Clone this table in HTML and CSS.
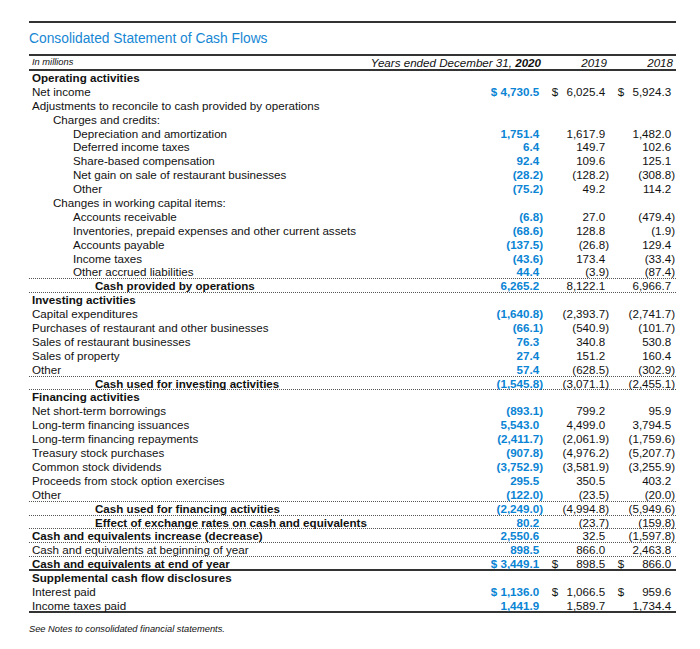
FILE: index.html
```html
<!DOCTYPE html>
<html>
<head>
<meta charset="utf-8">
<title>Consolidated Statement of Cash Flows</title>
<link rel="stylesheet" href="styles.css">
</head>
<body>
<div class="sheet">
  <div class="title">Consolidated Statement of Cash Flows</div>
  <div class="hd">
    <span class="hm">In millions</span>
    <span class="hy">Years ended December 31, <b>2020</b></span>
    <span class="hc2">2019</span>
    <span class="hc3">2018</span>
  </div>

  <div class="row"><span class="lb l0 b">Operating activities</span></div>
  <div class="row"><span class="lb l0">Net income</span><span class="v c1">$ 4,730.5</span><span class="v c2 dl"><span>$</span><span>6,025.4</span></span><span class="v c3 dl"><span>$</span><span>5,924.3</span></span></div>
  <div class="row"><span class="lb l0">Adjustments to reconcile to cash provided by operations</span></div>
  <div class="row"><span class="lb l1">Charges and credits:</span></div>
  <div class="row"><span class="lb l2">Depreciation and amortization</span><span class="v c1">1,751.4</span><span class="v c2">1,617.9</span><span class="v c3">1,482.0</span></div>
  <div class="row"><span class="lb l2">Deferred income taxes</span><span class="v c1">6.4</span><span class="v c2">149.7</span><span class="v c3">102.6</span></div>
  <div class="row"><span class="lb l2">Share-based compensation</span><span class="v c1">92.4</span><span class="v c2">109.6</span><span class="v c3">125.1</span></div>
  <div class="row"><span class="lb l2">Net gain on sale of restaurant businesses</span><span class="v c1 neg">(28.2)</span><span class="v c2 neg">(128.2)</span><span class="v c3 neg">(308.8)</span></div>
  <div class="row"><span class="lb l2">Other</span><span class="v c1 neg">(75.2)</span><span class="v c2">49.2</span><span class="v c3">114.2</span></div>
  <div class="row"><span class="lb l1">Changes in working capital items:</span></div>
  <div class="row"><span class="lb l2">Accounts receivable</span><span class="v c1 neg">(6.8)</span><span class="v c2">27.0</span><span class="v c3 neg">(479.4)</span></div>
  <div class="row"><span class="lb l2">Inventories, prepaid expenses and other current assets</span><span class="v c1 neg">(68.6)</span><span class="v c2">128.8</span><span class="v c3 neg">(1.9)</span></div>
  <div class="row"><span class="lb l2">Accounts payable</span><span class="v c1 neg">(137.5)</span><span class="v c2 neg">(26.8)</span><span class="v c3">129.4</span></div>
  <div class="row"><span class="lb l2">Income taxes</span><span class="v c1 neg">(43.6)</span><span class="v c2">173.4</span><span class="v c3 neg">(33.4)</span></div>
  <div class="row dot"><span class="lb l2">Other accrued liabilities</span><span class="v c1">44.4</span><span class="v c2 neg">(3.9)</span><span class="v c3 neg">(87.4)</span></div>
  <div class="row dot"><span class="lb l3 b">Cash provided by operations</span><span class="v c1">6,265.2</span><span class="v c2">8,122.1</span><span class="v c3">6,966.7</span></div>

  <div class="row"><span class="lb l0 b">Investing activities</span></div>
  <div class="row"><span class="lb l0">Capital expenditures</span><span class="v c1 neg">(1,640.8)</span><span class="v c2 neg">(2,393.7)</span><span class="v c3 neg">(2,741.7)</span></div>
  <div class="row"><span class="lb l0">Purchases of restaurant and other businesses</span><span class="v c1 neg">(66.1)</span><span class="v c2 neg">(540.9)</span><span class="v c3 neg">(101.7)</span></div>
  <div class="row"><span class="lb l0">Sales of restaurant businesses</span><span class="v c1">76.3</span><span class="v c2">340.8</span><span class="v c3">530.8</span></div>
  <div class="row"><span class="lb l0">Sales of property</span><span class="v c1">27.4</span><span class="v c2">151.2</span><span class="v c3">160.4</span></div>
  <div class="row dot"><span class="lb l0">Other</span><span class="v c1">57.4</span><span class="v c2 neg">(628.5)</span><span class="v c3 neg">(302.9)</span></div>
  <div class="row dot"><span class="lb l3 b">Cash used for investing activities</span><span class="v c1 neg">(1,545.8)</span><span class="v c2 neg">(3,071.1)</span><span class="v c3 neg">(2,455.1)</span></div>

  <div class="row"><span class="lb l0 b">Financing activities</span></div>
  <div class="row"><span class="lb l0">Net short-term borrowings</span><span class="v c1 neg">(893.1)</span><span class="v c2">799.2</span><span class="v c3">95.9</span></div>
  <div class="row"><span class="lb l0">Long-term financing issuances</span><span class="v c1">5,543.0</span><span class="v c2">4,499.0</span><span class="v c3">3,794.5</span></div>
  <div class="row"><span class="lb l0">Long-term financing repayments</span><span class="v c1 neg">(2,411.7)</span><span class="v c2 neg">(2,061.9)</span><span class="v c3 neg">(1,759.6)</span></div>
  <div class="row"><span class="lb l0">Treasury stock purchases</span><span class="v c1 neg">(907.8)</span><span class="v c2 neg">(4,976.2)</span><span class="v c3 neg">(5,207.7)</span></div>
  <div class="row"><span class="lb l0">Common stock dividends</span><span class="v c1 neg">(3,752.9)</span><span class="v c2 neg">(3,581.9)</span><span class="v c3 neg">(3,255.9)</span></div>
  <div class="row"><span class="lb l0">Proceeds from stock option exercises</span><span class="v c1">295.5</span><span class="v c2">350.5</span><span class="v c3">403.2</span></div>
  <div class="row dot"><span class="lb l0">Other</span><span class="v c1 neg">(122.0)</span><span class="v c2 neg">(23.5)</span><span class="v c3 neg">(20.0)</span></div>
  <div class="row dot"><span class="lb l3 b">Cash used for financing activities</span><span class="v c1 neg">(2,249.0)</span><span class="v c2 neg">(4,994.8)</span><span class="v c3 neg">(5,949.6)</span></div>
  <div class="row dot"><span class="lb l3 b">Effect of exchange rates on cash and equivalents</span><span class="v c1">80.2</span><span class="v c2 neg">(23.7)</span><span class="v c3 neg">(159.8)</span></div>
  <div class="row dot"><span class="lb l0 b">Cash and equivalents increase (decrease)</span><span class="v c1">2,550.6</span><span class="v c2">32.5</span><span class="v c3 neg">(1,597.8)</span></div>
  <div class="row dot"><span class="lb l0">Cash and equivalents at beginning of year</span><span class="v c1">898.5</span><span class="v c2">866.0</span><span class="v c3">2,463.8</span></div>
  <div class="row solid"><span class="lb l0 b">Cash and equivalents at end of year</span><span class="v c1">$ 3,449.1</span><span class="v c2 dl"><span>$</span><span>898.5</span></span><span class="v c3 dl"><span>$</span><span>866.0</span></span></div>
  <div class="row"><span class="lb l0 b">Supplemental cash flow disclosures</span></div>
  <div class="row"><span class="lb l0">Interest paid</span><span class="v c1">$ 1,136.0</span><span class="v c2 dl"><span>$</span><span>1,066.5</span></span><span class="v c3 dl"><span>$</span><span>959.6</span></span></div>
  <div class="row solid"><span class="lb l0">Income taxes paid</span><span class="v c1">1,441.9</span><span class="v c2">1,589.7</span><span class="v c3">1,734.4</span></div>

  <p class="note">See Notes to consolidated financial statements.</p>
</div>
</body>
</html>
```

FILE: styles.css
```css
html, body {
  margin: 0;
  padding: 0;
  background: #ffffff;
}

body {
  font-family: "Liberation Sans", Arial, sans-serif;
  color: #111111;
}

.sheet {
  width: 647px;
  margin-left: 29px;
  padding-top: 21px;
}

.title {
  border-top: 2px solid #333333;
  border-bottom: 2px solid #333333;
  height: 31px;
  line-height: 31px;
  font-size: 13.8px;
  color: #1787d4;
  white-space: nowrap;
}

.hd {
  display: grid;
  grid-template-columns: 451px 63px 66px 67px;
  height: 15px;
  line-height: 13px;
  box-sizing: border-box;
  border-bottom: 2px solid #333333;
  font-size: 11.6px;
  font-style: italic;
  white-space: nowrap;
}

.hm {
  grid-column: 1;
  grid-row: 1;
  font-size: 9.3px;
  padding-left: 3px;
}

.hy {
  grid-column: 1 / 3;
  grid-row: 1;
  justify-self: end;
  padding-right: 2px;
}

.hc2 {
  grid-column: 3;
  grid-row: 1;
  text-align: right;
  padding-right: 2px;
}

.hc3 {
  grid-column: 4;
  grid-row: 1;
  text-align: right;
  padding-right: 3px;
}

.row {
  display: grid;
  grid-template-columns: 451px 63px 66px 67px;
  height: 13.9px;
  line-height: 13.9px;
  box-sizing: border-box;
  font-size: 11.6px;
  white-space: nowrap;
}

.row.dot {
  border-bottom: 1px dotted #555555;
}

.row.solid {
  border-bottom: 2px solid #333333;
}

.lb {
  grid-column: 1;
  overflow: visible;
}

.l0 { padding-left: 3px; }
.l1 { padding-left: 24px; }
.l2 { padding-left: 44px; }
.l3 { padding-left: 66px; }

.b { font-weight: bold; }

.v {
  text-align: right;
  padding-right: 0.333em;
}

.v.neg {
  padding-right: 0;
}

.c1 {
  grid-column: 2;
  color: #0a84d4;
  font-weight: bold;
}

.c2 {
  grid-column: 3;
}

.c3 {
  grid-column: 4;
  padding-right: calc(0.333em + 1px);
}

.c3.neg {
  padding-right: 1px;
}

.dl {
  display: flex;
  justify-content: space-between;
  padding-left: 8.7px;
}

.note {
  margin: 10px 0 0 0;
  font-size: 9.3px;
  line-height: 12px;
  font-style: italic;
  white-space: nowrap;
}
```
